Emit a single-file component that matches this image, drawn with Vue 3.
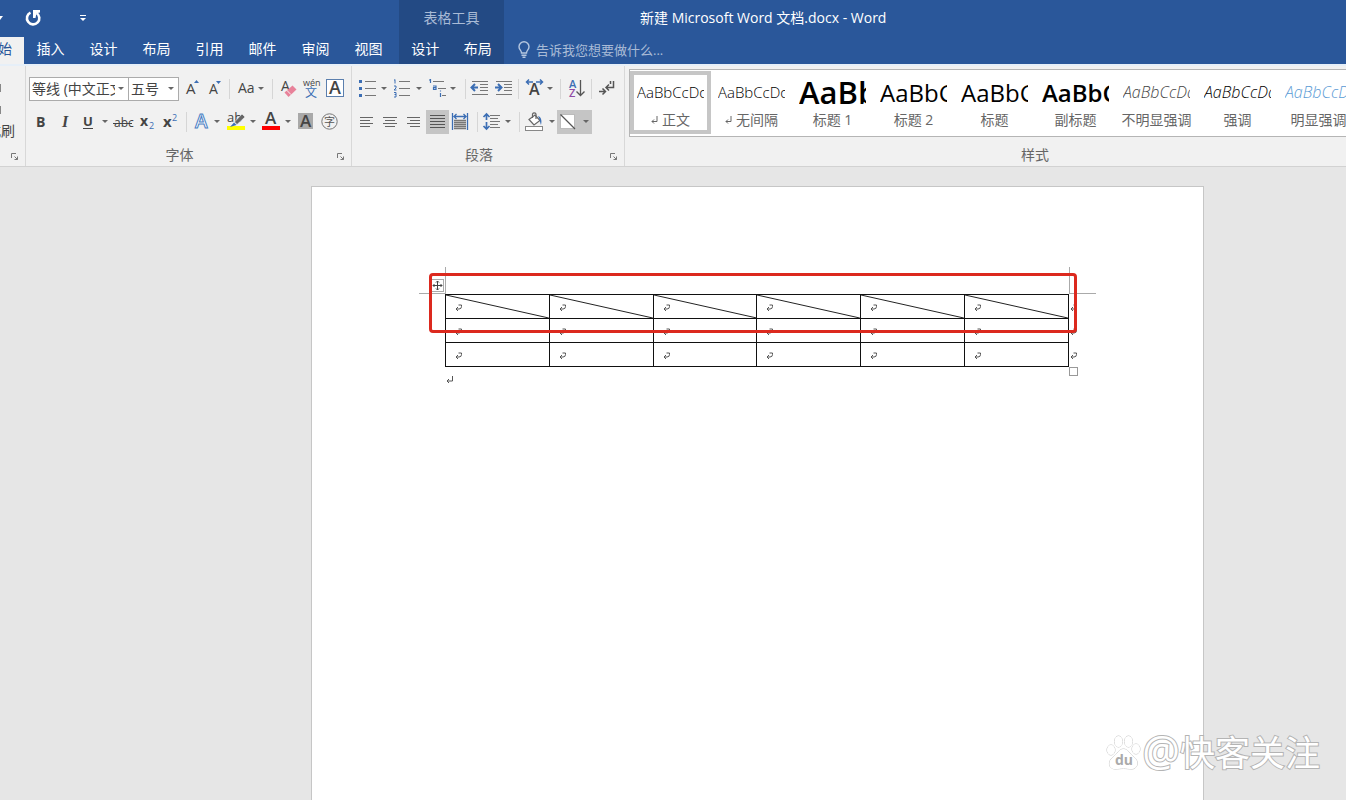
<script setup>
import { ref } from 'vue'

const tabs = ['插入', '设计', '布局', '引用', '邮件', '审阅', '视图']
const toolTabs = ['设计', '布局']
const columns = 6
const rows = [{ diagonal: true }, { diagonal: false }, { diagonal: false }]
const styles = [
  { name: '正文', look: 'body', mark: true },
  { name: '无间隔', look: 'body', mark: true },
  { name: '标题 1', look: 'heading-one' },
  { name: '标题 2', look: 'heading-two' },
  { name: '标题', look: 'heading-two' },
  { name: '副标题', look: 'subtitle' },
  { name: '不明显强调', look: 'subtle' },
  { name: '强调', look: 'emphasis' },
  { name: '明显强调', look: 'intense' },
]
const activeStyle = ref(0)
const fontName = ref('等线 (中文正文)')
const fontSize = ref('五号')
const query = ref('')
</script>

<template>
  <div class="app">
    <header class="header">
      <div class="header-main">
        <div class="quick">
          <button class="quick-more" aria-label="撤消选项"><svg width="4" height="16"><path d="M-3 6H3L0 10z" fill="#fff" /></svg></button>
          <button class="quick-redo" aria-label="重复">
            <svg width="18" height="18"><path d="M6.500 3.600A6.200 6.200 0 1 0 12.500 4" fill="none" stroke="#fff" stroke-width="2.600" /><path d="M9 1H16V3.500L12.500 4.200L11.500 9H9z" fill="#fff" /></svg>
          </button>
          <button class="quick-custom" aria-label="自定义快速访问工具栏"><svg width="8" height="8"><path d="M1 1.500H7" stroke="#fff" /><path d="M1 4H7L4 7z" fill="#fff" /></svg></button>
        </div>
        <nav class="tabs">
          <button class="tab tab-active"><span>开始</span></button>
          <button v-for="tab in tabs" :key="tab" class="tab">{{ tab }}</button>
        </nav>
      </div>
      <div class="header-tools">
        <div class="tools-title">表格工具</div>
        <nav class="tabs"><button v-for="tab in toolTabs" :key="tab" class="tab">{{ tab }}</button></nav>
      </div>
      <div class="header-rest">
        <h1 class="title">新建 Microsoft Word 文档.docx - Word</h1>
        <label class="tell">
          <svg width="14" height="18" fill="none" stroke="#b5c7e0" stroke-width="1.4"><path d="M4.500 12C4.500 9.500 2 8.800 2 5.700A5 5 0 0 1 12 5.700C12 8.800 9.500 9.500 9.500 12zM4.500 14.200H9.500M5.500 16.300H8.500" /></svg>
          <input v-model="query" type="text" aria-label="告诉我您想要做什么" placeholder="告诉我您想要做什么..." />
        </label>
      </div>
    </header>

    <div class="ribbon">
      <section class="group group-clip">
        <div class="clip-body">
          <button class="clip-line" aria-label="剪切"><i></i></button>
          <button class="clip-line" aria-label="复制"><i></i></button>
          <button class="clip-text">格式刷</button>
        </div>
        <footer class="caption">
          <span></span>
          <button class="launcher" aria-label="剪贴板设置"><svg width="8" height="8"><path d="M.5 5V.5H5M3.500 3.500L6.500 6.500M6.500 3.500V6.500H3.500" fill="none" stroke="#777" /></svg></button>
        </footer>
      </section>

      <section class="group group-font">
        <div class="row">
          <label class="combo combo-name">
            <select v-model="fontName" aria-label="字体"><option>等线 (中文正文)</option></select>
            <svg width="13" height="22"><path class="caret" d="M3 9H9L6 12z" /></svg>
          </label>
          <label class="combo combo-size">
            <select v-model="fontSize" aria-label="字号"><option>五号</option></select>
            <svg width="13" height="22"><path class="caret" d="M3 9H9L6 12z" /></svg>
          </label>
          <button class="tool w24" aria-label="增大字号"><svg width="24" height="24"><text x="7" y="17" class="glyph g15">A</text><path d="M15 6L17.500 3L20 6z" fill="#3c6eb4" /></svg></button>
          <button class="tool w24" aria-label="减小字号"><svg width="24" height="24"><text x="6" y="17" class="glyph g14">A</text><path d="M13 4H18L15.500 7z" fill="#3c6eb4" /></svg></button>
          <i class="sep"></i>
          <button class="tool w40" aria-label="更改大小写"><svg width="40" height="24"><text x="6" y="16" class="glyph g14">Aa</text><path class="caret" d="M26 10H32L29 13z" /></svg></button>
          <i class="sep"></i>
          <button class="tool w24" aria-label="清除格式"><svg width="24" height="24"><text x="6" y="14" class="glyph g14">A</text><path d="M9.500 15.500L17.500 8.500L21.500 12.500L13.500 20z" fill="#e8829a" /><path d="M11.500 13L16 17.600" stroke="#f1f1f1" /></svg></button>
          <button class="tool w24" aria-label="拼音指南"><svg width="24" height="24"><text x="4" y="9" class="glyph g9">wén</text><text x="6" y="20" class="cjk g12" fill="#3c6eb4">文</text></svg></button>
          <button class="tool w24" aria-label="字符边框"><svg width="24" height="24"><rect x="3.500" y="2.500" width="17" height="17" fill="#fff" stroke="#5b7fae" /><text x="6" y="17" class="glyph semi g18">A</text></svg></button>
        </div>
        <div class="row">
          <button class="tool w24" aria-label="加粗"><svg width="24" height="24"><text x="7" y="17" class="glyph bold g14">B</text></svg></button>
          <button class="tool w24" aria-label="倾斜"><svg width="24" height="24"><text x="9" y="17" class="serif g16">I</text></svg></button>
          <button class="tool w34" aria-label="下划线"><svg width="34" height="24"><text x="6" y="16" class="glyph bold g13">U</text><path d="M6 18.500H16" stroke="#444" /><path class="caret" d="M25 10H31L28 13z" /></svg></button>
          <button class="tool w24" aria-label="删除线"><svg width="24" height="24"><text x="2" y="17" class="glyph g12">abc</text><path d="M1 13.500H20" stroke="#444" /></svg></button>
          <button class="tool w24" aria-label="下标"><svg width="24" height="24"><text x="4" y="16" class="glyph bold g14">x</text><text x="13" y="19" class="glyph g9 blue">2</text></svg></button>
          <button class="tool w24" aria-label="上标"><svg width="24" height="24"><text x="3" y="17" class="glyph bold g15">x</text><text x="12" y="11" class="glyph g9 blue">2</text></svg></button>
          <i class="sep"></i>
          <button class="tool w34" aria-label="文本效果"><svg width="34" height="24"><text x="6" y="18" class="outline">A</text><path class="caret" d="M25 10H31L28 13z" /></svg></button>
          <button class="tool w34" aria-label="突出显示"><svg width="34" height="24"><rect x="3" y="16" width="18" height="4" fill="#ff0" /><text x="3" y="12" class="glyph g13">ab</text><path d="M18 4L21 7L13 14.500L10.500 12z" fill="#666" stroke="#f1f1f1" stroke-width=".6" /><path d="M10 12.500L12.500 15L6 17z" fill="#3c6eb4" /><path class="caret" d="M26 10H32L29 13z" /></svg></button>
          <button class="tool w40" aria-label="字体颜色"><svg width="40" height="24"><rect x="3" y="16" width="18" height="4" fill="#f00" /><text x="6" y="14" class="glyph semi g17">A</text><path class="caret" d="M26 10H32L29 13z" /></svg></button>
          <button class="tool w24" aria-label="字符底纹"><svg width="24" height="24"><rect x="1" y="3" width="15" height="16" fill="#a9a9a9" /><text x="3" y="17" class="glyph semi g17">A</text></svg></button>
          <button class="tool w24" aria-label="带圈字符"><svg width="24" height="24"><circle cx="8.500" cy="11.500" r="7.700" fill="none" stroke="#777" /><text x="3" y="16" class="cjk g11" fill="#555">字</text></svg></button>
        </div>
        <footer class="caption">
          <span>字体</span>
          <button class="launcher" aria-label="字体设置"><svg width="8" height="8"><path d="M.5 5V.5H5M3.500 3.500L6.500 6.500M6.500 3.500V6.500H3.500" fill="none" stroke="#777" /></svg></button>
        </footer>
      </section>

      <section class="group group-para">
        <div class="row">
          <button class="tool w34" aria-label="项目符号"><svg width="34" height="24"><path d="M4 3h3v3h-3zM4 10h3v3h-3zM4 17h3v3h-3z" fill="#3c6eb4" /><path d="M10 4.500H21M10 11.500H21M10 18.500H21" stroke="#777" /><path class="caret" d="M26 10H32L29 13z" /></svg></button>
          <button class="tool w34" aria-label="编号"><svg width="34" height="24"><path d="M5 2.500V6.500M4 3H5M4 9H6V11L4 13H6.500M4 15.500H6V20H4M4.500 17.500H6" fill="none" stroke="#3c6eb4" /><path d="M9 4.500H20M9 11.500H20M9 18.500H20" stroke="#777" /><path class="caret" d="M26 10H32L29 13z" /></svg></button>
          <button class="tool w40" aria-label="多级列表"><svg width="40" height="24"><path d="M5.500 2V6M4 3H5.500M8 9H11V12.500H8.500V10.700H11M15.500 13.500V14.500M15.500 16V20" fill="none" stroke="#3c6eb4" stroke-width="1.200" /><path d="M8 4.500H19M13 11.500H21M17 18.500H21" stroke="#777" /><path class="caret" d="M25 10H31L28 13z" /></svg></button>
          <i class="sep"></i>
          <button class="tool w24" aria-label="减少缩进"><svg width="24" height="24"><path d="M4 4.500H20M12 7.500H20M12 10.500H20M12 13.500H20M4 17.500H20" stroke="#777" /><path d="M10 10.500H4M7 7L3.500 10.500L7 14" fill="none" stroke="#3c6eb4" stroke-width="2" /></svg></button>
          <button class="tool w24" aria-label="增加缩进"><svg width="24" height="24"><path d="M4 4.500H20M12 7.500H20M12 10.500H20M12 13.500H20M4 17.500H20" stroke="#777" /><path d="M3 10.500H9M6 7L9.500 10.500L6 14" fill="none" stroke="#3c6eb4" stroke-width="2" /></svg></button>
          <i class="sep"></i>
          <button class="tool w34" aria-label="中文版式"><svg width="34" height="24"><text x="8" y="18" class="glyph semi g16">A</text><path d="M12 5H5.500M8 2.500L5.500 5L8 7.500M15 5H21.500M19 2.500L21.500 5L19 7.500" fill="none" stroke="#3c6eb4" stroke-width="1.500" /><path class="caret" d="M26 10H32L29 13z" /></svg></button>
          <i class="sep sep-wide"></i>
          <button class="tool w24" aria-label="排序"><svg width="24" height="24"><text x="4" y="11" class="glyph semi g11 blue">A</text><text x="4" y="20" class="glyph semi g11 purple">Z</text><path d="M15.500 3V18.500M11.500 14.500L15.500 18.500L19.500 14.500" fill="none" stroke="#555" stroke-width="1.300" /></svg></button>
          <i class="sep"></i>
          <button class="tool w24" aria-label="显示编辑标记"><svg width="24" height="24" fill="none" stroke="#555" stroke-width="1.500"><path d="M19.500 4V10.500H12.500M15 7.500L12 10.500L15 13.500M16.500 4V7M5 14.500H11M8.500 11.500L11.500 14.500L8.500 17.500" /></svg></button>
        </div>
        <div class="row">
          <button class="tool w24" aria-label="左对齐"><svg width="24" height="24"><path d="M5 7.500H18M5 10.500H15M5 13.500H18M5 16.500H15" stroke="#666" /></svg></button>
          <button class="tool w24" aria-label="居中"><svg width="24" height="24"><path d="M4 7.500H18M6 10.500H16M4 13.500H18M6 16.500H16" stroke="#666" /></svg></button>
          <button class="tool w23" aria-label="右对齐"><svg width="23" height="24"><path d="M4 7.500H17M7 10.500H17M4 13.500H17M7 16.500H17" stroke="#666" /></svg></button>
          <button class="tool w23 on" aria-label="两端对齐" aria-pressed="true"><svg width="23" height="24"><path d="M4 5.500H19M4 8.500H19M4 11.500H19M4 14.500H19M4 17.500H19" stroke="#555" /></svg></button>
          <button class="tool w24" aria-label="分散对齐"><svg width="24" height="24"><path d="M3.500 3V20M18.500 3V20M5 6.500H17M7.500 4L5 6.500L7.500 9M14.500 4L17 6.500L14.500 9" fill="none" stroke="#3c6eb4" stroke-width="1.300" /><path d="M5 10.500H17M5 12.500H17M5 14.500H17M5 16.500H17M5 18.500H17" stroke="#777" stroke-width="1.400" /></svg></button>
          <i class="sep sep-wide"></i>
          <button class="tool w34" aria-label="行距"><svg width="34" height="24"><path d="M4.500 4V10M1.500 7L4.500 4L7.500 7M4.500 12V19M1.500 16L4.500 19L7.500 16" fill="none" stroke="#3c6eb4" stroke-width="1.700" /><path d="M8 5.500H18M8 8.500H16M8 11.500H18M8 14.500H16M8 17.500H18" stroke="#777" /><path class="caret" d="M23 10H29L26 13z" /></svg></button>
          <i class="sep"></i>
          <button class="tool w34" aria-label="底纹"><svg width="34" height="24"><rect x="3.500" y="16.500" width="17" height="4" fill="#fff" stroke="#888" /><path d="M7 9.500L13 5L18 10.500L12 15z" fill="#fff" stroke="#666" stroke-width="1.200" /><path d="M10.500 8V4A2 2 0 0 1 14 4V9" fill="none" stroke="#666" stroke-width="1.200" /><path d="M16 6C19.500 7 20 11 19 15C18 13 18 9 16 6z" fill="#3c6eb4" /><path class="caret" d="M27 10H33L30 13z" /></svg></button>
          <button class="tool w34 on" aria-label="边框" aria-pressed="true"><svg width="34" height="24"><rect x="3" y="4" width="15" height="15" fill="#fff" /><rect x="3.500" y="4.500" width="14" height="14" fill="none" stroke="#777" stroke-dasharray="1 1" /><path d="M3.500 4.500L18 19" stroke="#555" stroke-width="1.200" /><path class="caret" d="M26 10H32L29 13z" /></svg></button>
        </div>
        <footer class="caption">
          <span>段落</span>
          <button class="launcher" aria-label="段落设置"><svg width="8" height="8"><path d="M.5 5V.5H5M3.500 3.500L6.500 6.500M6.500 3.500V6.500H3.500" fill="none" stroke="#777" /></svg></button>
        </footer>
      </section>

      <section class="group group-styles">
        <div class="gallery">
          <button v-for="(item, i) in styles" :key="item.name" class="style" :class="{ chosen: i === activeStyle }" @click="activeStyle = i">
            <span class="sample" :class="item.look">AaBbCcDd</span>
            <span class="style-name"><svg v-if="item.mark" width="7" height="8"><path d="M6 0V5.500H1M3 3.500L1 5.500L3 7.500" fill="none" stroke="#666" /></svg>{{ item.name }}</span>
          </button>
        </div>
        <footer class="caption"><span>样式</span></footer>
      </section>
    </div>

    <main class="workspace">
      <article class="page">
        <div class="table-wrap">
          <table class="grid">
            <tbody>
              <tr v-for="(row, r) in rows" :key="r">
                <td v-for="c in columns" :key="c">
                  <svg v-if="row.diagonal" class="diagonal" viewBox="0 0 100 24" preserveAspectRatio="none"><path d="M0 0L100 24" stroke="#222" vector-effect="non-scaling-stroke" /></svg>
                  <svg class="mark" width="8" height="8"><path d="M3.500 1H6.500V2.500Q6.500 5 4 5H1M3 3L1 5L3 7" fill="none" stroke="#555" /></svg>
                  <svg v-if="c === columns" class="mark row-end" width="8" height="8"><path d="M3.500 1H6.500V2.500Q6.500 5 4 5H1M3 3L1 5L3 7" fill="none" stroke="#555" /></svg>
                </td>
              </tr>
            </tbody>
          </table>
          <i class="corner corner-left"></i>
          <i class="corner corner-right"></i>
          <button class="move" aria-label="移动表格"><svg width="11" height="11" fill="none" stroke="#444"><path d="M5.500 1V10M1 5.500H10M4 2.500L5.500 1L7 2.500M4 8.500L5.500 10L7 8.500M2.500 4L1 5.500L2.500 7M8.500 4L10 5.500L8.500 7" /></svg></button>
          <i class="resize"></i>
          <i class="callout"></i>
        </div>
        <svg class="end-mark" width="8" height="8"><path d="M6.500 0V5H1M3 3L1 5L3 7" fill="none" stroke="#555" /></svg>
      </article>
      <div class="watermark">
        <svg width="36" height="36" fill="#fff" stroke="#c4c4c4"><ellipse cx="5" cy="15" rx="4" ry="5" /><ellipse cx="12.500" cy="6.500" rx="4" ry="5.500" /><ellipse cx="22.500" cy="6.500" rx="4" ry="5.500" /><ellipse cx="30" cy="14" rx="4" ry="5" /><path d="M17.500 14C22 14 24 19 28 22C34 27 31 34 26 34C22 34 21 33.500 17.500 33.500C14 33.500 13 34 9 34C3 34 1 27 7 22C11 19 13 14 17.500 14z" /><text x="9" y="30" class="du">du</text></svg>
        <span><span class="at">@</span>快客关注</span>
      </div>
    </main>
  </div>
</template>

<style>
body {
  background: #e6e6e6;
}
</style>

<style scoped>
* {
  box-sizing: border-box;
}
.app {
  display: flex;
  flex-direction: column;
  min-height: 100vh;
  overflow: hidden;
  background: #e6e6e6;
  color: #444;
  font: 14px/20px "Open Sans", "Noto Sans CJK SC", sans-serif;
}
button,
input,
select {
  margin: 0;
  padding: 0;
  border: 0;
  background: none;
  color: inherit;
  font: inherit;
}
svg {
  display: block;
  flex: none;
}

.header {
  display: flex;
  height: 64px;
  background: #2a579a;
  color: #fff;
}
.header-main {
  flex: none;
  padding-right: 4px;
}
.quick {
  display: flex;
  align-items: center;
  height: 35px;
}
.quick-redo {
  margin-left: 20px;
}
.quick-custom {
  margin-left: 37px;
}
.tabs {
  display: flex;
  height: 29px;
}
.tab {
  width: 53px;
  padding-bottom: 2px;
  white-space: nowrap;
}
.tab-active {
  display: flex;
  justify-content: flex-end;
  align-items: center;
  width: 24px;
  height: 27px;
  margin-top: 2px;
  padding: 0 12px 4px 0;
  background: #f1f1f1;
  color: #2a579a;
}
.header-tools {
  flex: none;
  width: 105px;
  background: #234a84;
}
.header-tools .tab {
  flex: 1;
}
.tools-title {
  height: 35px;
  color: #a9bbd6;
  line-height: 35px;
  text-align: center;
}
.header-rest {
  flex: 1;
  min-width: 0;
}
.title {
  height: 35px;
  margin: 0;
  padding-left: 136px;
  overflow: hidden;
  font-size: 14px;
  font-weight: 400;
  line-height: 35px;
  white-space: nowrap;
}
.tell {
  display: flex;
  align-items: center;
  gap: 5px;
  height: 29px;
  padding-left: 13px;
}
.tell input {
  flex: 1;
  min-width: 0;
  height: 24px;
  outline: 0;
  color: #fff;
  font-size: 13px;
}
.tell input::placeholder {
  color: #a9bbd6;
  opacity: 1;
}

.ribbon {
  display: flex;
  height: 103px;
  border-top: 2px solid #e6eff8;
  border-bottom: 1px solid #d2d2d2;
  background: #f1f1f1;
}
.group {
  display: flex;
  flex: none;
  flex-direction: column;
  padding: 11px 0 0 3px;
  border-right: 1px solid #d8d8d8;
}
.group-clip {
  width: 26px;
  padding-left: 0;
}
.clip-body {
  display: flex;
  flex-direction: column;
  align-items: flex-start;
  width: 15px;
  height: 67px;
}
.clip-line {
  flex: none;
  height: 22px;
}
.clip-line i {
  display: block;
  width: 1px;
  height: 8px;
  background: #888;
}
.clip-text {
  align-self: flex-end;
  white-space: nowrap;
}
.group-font {
  width: 326px;
}
.group-para {
  width: 273px;
}
.group-styles {
  flex: 1;
  min-width: 0;
  padding: 3px 0 0 4px;
  border: 0;
}
.row {
  display: flex;
  align-items: center;
  height: 33px;
  padding-bottom: 9px;
}
.row + .caption {
  margin-top: 1px;
}
.tool {
  flex: none;
  height: 24px;
}
.w23 {
  width: 23px;
}
.w24 {
  width: 24px;
}
.w34 {
  width: 35px;
}
.w40 {
  width: 38px;
}
.on {
  background: #c5c5c5;
}
.sep {
  flex: none;
  width: 1px;
  height: 20px;
  margin: 0 2px;
  background: #d6d6d6;
}
.sep-wide {
  margin: 0 4px;
}
.caret {
  fill: #666;
}
.glyph {
  fill: #444;
  font-family: "Open Sans", sans-serif;
}
.cjk {
  font-family: "Noto Sans CJK SC", sans-serif;
}
.serif {
  fill: #444;
  font-family: "Liberation Serif", serif;
  font-style: italic;
  font-weight: 700;
}
.bold {
  font-weight: 700;
}
.semi {
  font-weight: 600;
}
.blue {
  fill: #3c6eb4;
}
.purple {
  fill: #8f4aa5;
}
.outline {
  fill: #fff;
  stroke: #4a7fc4;
  stroke-width: 1px;
  font: 600 19px "Open Sans", sans-serif;
}
.g9 { font-size: 9px; }
.g11 { font-size: 11px; }
.g12 { font-size: 12px; }
.g13 { font-size: 13px; }
.g14 { font-size: 14px; }
.g15 { font-size: 15px; }
.g16 { font-size: 16px; }
.g17 { font-size: 17px; }
.g18 { font-size: 18px; }
.combo {
  position: relative;
  flex: none;
  height: 24px;
  border: 1px solid #ababab;
  background: #fff;
}
.combo-name {
  width: 100px;
}
.combo-size {
  width: 51px;
  margin-left: -1px;
}
.combo select {
  display: block;
  width: 100%;
  height: 22px;
  padding: 0 13px 0 2px;
  appearance: none;
  outline: 0;
}
.combo svg {
  position: absolute;
  top: 0;
  right: 0;
  pointer-events: none;
}
.caption {
  display: flex;
  align-items: center;
  height: 22px;
  color: #666;
}
.caption span {
  flex: 1;
  text-align: center;
}
.group-font .caption span,
.group-para .caption span {
  padding-right: 7px;
}
.launcher {
  width: 14px;
  padding-top: 3px;
}

.gallery {
  display: flex;
  height: 68px;
  padding: 1px 0 0;
  border: 1px solid #b5b5b5;
  border-right: 0;
  background: #fff;
  overflow: hidden;
}
.style {
  display: flex;
  flex: none;
  flex-direction: column;
  align-items: center;
  width: 81px;
  height: 63px;
  border: 4px solid transparent;
}
.chosen {
  border-color: #c6c6c6;
}
.sample {
  display: block;
  width: 67px;
  height: 35px;
  overflow: hidden;
  color: #000;
  line-height: 35px;
  text-align: left;
  white-space: nowrap;
}
.body {
  font-size: 15px;
  font-weight: 300;
}
.heading-one {
  font-size: 31px;
  font-weight: 600;
}
.heading-two {
  font-size: 24px;
}
.subtitle {
  font-size: 24px;
  font-weight: 600;
}
.subtle,
.emphasis,
.intense {
  font-size: 16px;
  font-style: italic;
  font-weight: 300;
}
.subtle {
  color: #444;
}
.intense {
  color: #5b9bd5;
}
.style-name {
  display: flex;
  align-items: center;
  gap: 4px;
  height: 20px;
  color: #666;
  white-space: nowrap;
}
.group-styles .caption {
  height: 22px;
  margin-top: 7px;
  padding-left: 95px;
}

.workspace {
  position: relative;
  display: flex;
  flex: 1;
  padding: 19px 142px 0 311px;
}
.page {
  flex: 1;
  min-width: 0;
  padding: 107px 134px 0 133px;
  border: 1px solid #c6c6c6;
  border-bottom: 0;
  background: #fff;
}
.table-wrap {
  position: relative;
}
.grid {
  width: 100%;
  border-collapse: collapse;
  table-layout: fixed;
}
.grid td {
  position: relative;
  height: 24px;
  padding: 0 0 0 9px;
  border: 1px solid #111;
}
.diagonal {
  position: absolute;
  inset: 0;
  width: 100%;
  height: 100%;
}
.mark {
  margin-top: 2px;
}
.row-end {
  position: absolute;
  top: 7px;
  left: 100%;
  margin-left: 2px;
}
.corner {
  position: absolute;
  top: -27px;
  width: 27px;
  height: 27px;
  border: 0 solid #aaa;
  border-bottom-width: 1px;
}
.corner-left {
  left: -26px;
  border-right-width: 1px;
}
.corner-right {
  right: -27px;
  border-left-width: 1px;
}
.move {
  position: absolute;
  top: -15px;
  left: -14px;
  border: 1px solid #aaa;
  background: #fff;
}
.resize {
  position: absolute;
  right: -9px;
  bottom: -9px;
  width: 9px;
  height: 9px;
  border: 1px solid #999;
  background: #fff;
}
.callout {
  position: absolute;
  top: -21px;
  right: -8px;
  left: -16px;
  height: 60px;
  border: 3px solid #dc291e;
  border-radius: 4px;
  pointer-events: none;
}
.end-mark {
  margin: 9px 0 0 1px;
}
.watermark {
  position: absolute;
  right: 26px;
  bottom: 20px;
  display: flex;
  align-items: center;
  color: #fff;
  font: 35px/54px "Open Sans", "Noto Sans CJK SC", sans-serif;
  white-space: nowrap;
  -webkit-text-stroke: 2px #b4b4b4;
  paint-order: stroke fill;
}
.watermark svg {
  -webkit-text-stroke: 0;
}
.at {
  font-size: 42px;
  line-height: 35px;
}
.du {
  fill: #aaa;
  stroke: none;
  font: 700 14px "Open Sans", sans-serif;
}
</style>
